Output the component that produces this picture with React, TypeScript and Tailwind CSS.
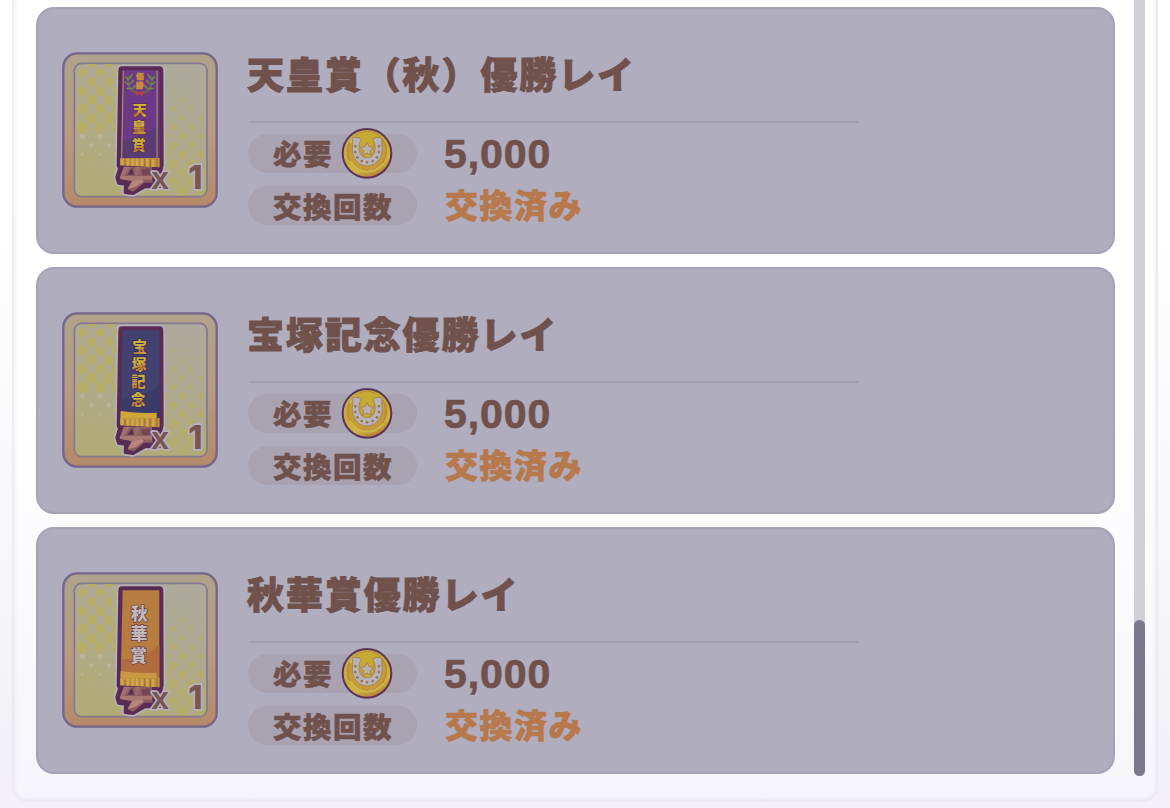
import React from 'react';

type Kind = 'tenno' | 'takarazuka' | 'shuka';

interface Prize {
  kind: Kind;
  title: string;
  cost: string;
}

const prizes: Prize[] = [
  { kind: 'tenno', title: '天皇賞（秋）優勝レイ', cost: '5,000' },
  { kind: 'takarazuka', title: '宝塚記念優勝レイ', cost: '5,000' },
  { kind: 'shuka', title: '秋華賞優勝レイ', cost: '5,000' },
];

interface Glyph {
  c: string;
  x: number;
  y: number;
}

interface Banner {
  cloth: string;
  shade: string;
  outline: string;
  size: number;
  glyphs: Glyph[];
}

const banners: Record<Kind, Banner> = {
  tenno: {
    cloth: '#6d3888',
    shade: '#5a3b73',
    outline: '#573052',
    size: 42,
    glyphs: [
      { c: '天', x: 269, y: 225 },
      { c: '皇', x: 267, y: 275 },
      { c: '賞', x: 266, y: 331 },
    ],
  },
  takarazuka: {
    cloth: '#42416f',
    shade: '#3b3b69',
    outline: '#38285c',
    size: 44,
    glyphs: [
      { c: '宝', x: 269, y: 157 },
      { c: '塚', x: 267, y: 209 },
      { c: '記', x: 265, y: 261 },
      { c: '念', x: 264, y: 314 },
    ],
  },
  shuka: {
    cloth: '#b77d40',
    shade: '#b06c3e',
    outline: '#6b3f45',
    size: 50,
    glyphs: [
      { c: '秋', x: 268, y: 179 },
      { c: '華', x: 267, y: 241 },
      { c: '賞', x: 266, y: 307 },
    ],
  },
};

const banner = "font-['Liberation_Sans','Noto_Sans_CJK_JP',sans-serif] font-black";

// Halftone dots: dark ones upper left and lower right, light ones lower left.
const dots: { x: number; y: number; r: number; light: boolean }[] = [];
for (let row = 0; row < 15; row++) {
  const y = 71 + row * 27.2;
  const light = y > 280;
  for (let col = 0; col < 8; col++) {
    const even = row % 2 === 0;
    const shifted = light ? !even : even;
    const left = 97 + col * 53 + (shifted ? 27 : 0);
    if (left < 205) {
      dots.push({ x: left, y, r: light ? Math.max(1.5, 9 - (y - 280) / 14) : 12 + Math.min(5, y / 50), light });
    }
    const right = 370 + (col - 1) * 54 + (even ? 27 : 0);
    if (right > 340 && right < 480 && y > 145) {
      dots.push({ x: right, y, r: Math.min(15, 4.5 + (y - 150) / 20 - (right - 370) / 40), light: false });
    }
  }
}

function PrizeIcon({ kind }: { kind: Kind }) {
  const b = banners[kind];
  const id = (s: string) => `${kind}-${s}`;
  const silhouette =
    'M216 83 H329 Q336 83 336 92 L337 376 L334 388 L330 440 L284 441 L250 461 L225 458 L226 433 L205 430 L200 412 L208 386 L204 378 L209 92 Q209 83 216 83 Z';
  return (
    <svg className="block h-[156px] w-[156px] shrink-0" viewBox="36 36 468 468">
      <defs>
        <linearGradient id={id('frame')} x1="0" y1="0" x2="0" y2="1">
          <stop offset="0" stopColor="#b1a28b" />
          <stop offset="0.5" stopColor="#b69b80" />
          <stop offset="1" stopColor="#b48a69" />
        </linearGradient>
        <linearGradient id={id('bg')} x1="0.8" y1="0" x2="0.4" y2="1">
          <stop offset="0" stopColor="#adaa9c" />
          <stop offset="0.5" stopColor="#aea98f" />
          <stop offset="1" stopColor="#b1ab76" />
        </linearGradient>
        <linearGradient id={id('gold')} x1="0" y1="0" x2="0.3" y2="1">
          <stop offset="0" stopColor="#cdb33e" />
          <stop offset="0.6" stopColor="#cdab3c" />
          <stop offset="0.8" stopColor="#b87035" />
          <stop offset="1" stopColor="#caa440" />
        </linearGradient>
        <clipPath id={id('clip')}>
          <rect x="76" y="72" width="392" height="396" rx="18" />
        </clipPath>
      </defs>
      <rect x="40" y="40" width="460" height="460" rx="42" fill={`url(#${id('frame')})`} stroke="#75648b" strokeWidth="7" />
      <rect x="73" y="70" width="398" height="400" rx="22" fill={`url(#${id('bg')})`} stroke="#84778f" strokeWidth="5" />
      <g clipPath={`url(#${id('clip')})`}>
        {dots.map((d, i) => (
          <circle key={i} cx={d.x} cy={d.y} r={d.r} fill={d.light ? '#bbb499' : '#b7ad66'} opacity={d.x > 300 ? 0.7 : 0.9} />
        ))}
      </g>
      <path d={silhouette} fill="#b8b0ba" stroke="#b8b0ba" strokeWidth="18" strokeLinejoin="round" />
      <path d={silhouette} fill="#582c55" stroke="#582c55" strokeWidth="8" strokeLinejoin="round" />
      {/* wooden stand */}
      <path d="M222 380 H306 L308 428 L282 428 L250 455 L232 448 L246 423 L209 416 Z" fill="#8d5d65" />
      <path d="M222 380 L240 380 L224 406 L209 414 Z" fill="#a2716f" />
      <path d="M246 384 L252 404 L232 404 Z" fill="#56304d" />
      <path d="M256 381 L270 381 L264 405 L254 405 Z" fill="#996a6c" />
      <path d="M274 389 L300 385 L303 404 L278 406 Z" fill="#734654" />
      <path d="M211 408 L306 408 L306 419 L270 418 L246 423 L210 417 Z" fill="#a8776f" />
      <path d="M246 424 L275 417 L282 424 L257 441 L233 447 Z" fill="#b88679" />
      {/* cloth */}
      <path d="M218 91 H328 L328 359 H212 Z" fill={b.cloth} />
      <path d="M214 300 Q282 292 328 256 V359 H213 Z" fill={b.shade} />
      {kind === 'tenno' ? (
        <>
          <path d="M220 92 L215 354 M321 92 V354" fill="none" stroke="#b39a65" strokeWidth="3" />
          <path d="M235 107 Q230 148 259 160 M305 107 Q311 148 280 160" fill="none" stroke="#63783f" strokeWidth="4" />
          <path d="M234 119 l-6 -8 M235 133 l-8 -6 M242 146 l-10 -1 M238 116 l8 -12 M240 132 l10 -10 M247 146 l9 -9 M306 119 l6 -8 M305 133 l8 -6 M298 146 l10 -1 M302 116 l-8 -12 M300 132 l-10 -10 M293 146 l-9 -9" stroke="#6f8a48" strokeWidth="5" strokeLinecap="round" />
          <path d="M256 152 L269 157 L282 152 L279 169 L269 162 L258 168 Z" fill="#b5423f" />
          <g className={banner} fontSize="22" textAnchor="middle" fill="#d0a03c" stroke="#c58a3a" strokeWidth="2">
            <text x="270" y="117">優</text>
            <text x="269" y="143">勝</text>
          </g>
        </>
      ) : (
        <path d="M212 333 Q269 342 320 338 V360 H211 Z" fill={kind === 'shuka' ? '#c79940' : '#d0a737'} />
      )}
      <g className={banner} fontSize={b.size} textAnchor="middle">
        {b.glyphs.map((g) => (
          <text key={g.c} x={g.x} y={g.y} fill={kind === 'shuka' ? '#c0b9bd' : `url(#${id('gold')})`} stroke={b.outline} strokeWidth="4" paintOrder="stroke">
            {g.c}
          </text>
        ))}
      </g>
      <path d="M210 355 L329 354 V382 L210 376 Z" fill="#bf8f3d" />
      <path d="M217 356 V376 M233 356 V377 M248 356 V378 M261 356 V379 M276 356 V379 M292 356 V380 M309 356 V380" stroke="#cda94b" strokeWidth="7" />
      <path d="M225 359 V377 M284 357 V379 M301 357 V380 M321 355 V381" stroke="#a9733d" strokeWidth="4" />
      {/* quantity */}
      <g fill="#79564f" stroke="#b8b0c1" strokeWidth="10" strokeLinejoin="round" paintOrder="stroke">
        <text className="font-['Liberation_Sans',sans-serif] font-bold" x="304" y="446" fontSize="96">x</text>
        <text className="font-['Inter',sans-serif] font-extrabold" x="415" y="446" fontSize="97">1</text>
      </g>
    </svg>
  );
}

function Coin({ uid }: { uid: string }) {
  return (
    <svg className="-my-[7px] block h-[52px] w-[52px] shrink-0" viewBox="0 0 156 156">
      <defs>
        <linearGradient id={uid} x1="0.2" y1="0" x2="0.6" y2="1">
          <stop offset="0" stopColor="#c3aa4a" />
          <stop offset="0.5" stopColor="#c9a937" />
          <stop offset="0.78" stopColor="#cdb443" />
          <stop offset="1" stopColor="#b67d3a" />
        </linearGradient>
      </defs>
      <circle cx="78" cy="76" r="73" fill={`url(#${uid})`} stroke="#5a3358" strokeWidth="6" />
      <circle cx="78" cy="70" r="58" fill="#c49b37" stroke="#b98838" strokeWidth="4" />
      <path d="M29 101 Q46 130 79 131 Q108 130 126 108" fill="none" stroke="#cdb74a" strokeWidth="6" strokeLinecap="round" />
      <path d="M28 44 A58 58 0 0 1 52 20" fill="none" stroke="#c5ba7e" strokeWidth="5" strokeLinecap="round" />
      <path d="M40 25 Q78 -2 116 25 L99 41 L94 85 Q77 93 63 82 L56 43 Z" fill="#c5aa34" />
      <path d="M34 34 Q37 27 44 28 L57 30 Q63 34 57 41 C51 56 52 89 78 89 C104 89 106 56 99 41 Q94 34 100 30 L113 28 Q120 27 123 34 L122 45 C131 78 111 114 78 114 C45 114 27 78 36 45 Z" fill="#b8b2ba" stroke="#a98752" strokeWidth="3" />
      <path d="M78 43 L84 56 L98 58 L88 68 L91 82 L78 75 L65 82 L68 68 L58 58 L72 56 Z" fill="#b9b2b5" stroke="#ab8146" strokeWidth="3" strokeLinejoin="round" />
      <g fill="#97754a">
        <circle cx="43" cy="55" r="4" />
        <circle cx="43" cy="72" r="4" />
        <circle cx="49" cy="88" r="4" />
        <circle cx="62" cy="99" r="4" />
        <circle cx="78" cy="103" r="4" />
        <circle cx="95" cy="99" r="4" />
        <circle cx="108" cy="88" r="4" />
        <circle cx="114" cy="72" r="4" />
        <circle cx="114" cy="55" r="4" />
      </g>
    </svg>
  );
}

function PrizeCard({ prize }: { prize: Prize }) {
  return (
    <article className="flex h-[247px] w-[1079px] shrink-0 rounded-[18px] border-2 border-[#a7a3b4] bg-[#b0adbe] pt-[43px] pl-[24px] text-[#70514c] shadow-[inset_0_0_1px_#aba7b8]">
      <PrizeIcon kind={prize.kind} />
      <div className="ml-[30px] w-[611px]">
        <h2 className="-mt-[2px] -ml-px h-[48px] text-[37px] leading-[46px] font-black tracking-[1.9px] whitespace-nowrap [-webkit-text-stroke:0.9px_#70514c]">{prize.title}</h2>
        <div className="mt-[23px] ml-px h-[2px] bg-[#a19cae]" />
        <div className="mt-[11px] flex h-[39px] items-center">
          <div className="flex h-[39px] w-[169px] items-center rounded-full bg-[#a9a2b0] pl-[25px]">
            <span className="-mt-[2px] w-[68px] text-[28.5px] leading-[39px] font-black tracking-[1.5px] whitespace-nowrap [-webkit-text-stroke:0.6px_#70514c]">必要</span>
            <Coin uid={`coin-${prize.kind}`} />
          </div>
          <span className="ml-[27px] pt-px font-['Liberation_Sans',sans-serif] text-[41px] leading-[39px] font-bold tracking-[0.9px] [-webkit-text-stroke:0.7px_#70514c]">{prize.cost}</span>
        </div>
        <div className="mt-[13px] flex h-[39px] items-center">
          <div className="h-[39px] w-[169px] rounded-full bg-[#a9a2b0] pl-[25px]">
            <span className="block text-[28.5px] leading-[39px] font-black tracking-[1.5px] whitespace-nowrap [-webkit-text-stroke:0.6px_#70514c]">交換回数</span>
          </div>
          <span className="-mt-[3px] ml-[28px] text-[33px] leading-[39px] font-black tracking-[1.5px] text-[#b7784c] [-webkit-text-stroke:0.6px_#b7784c]">交換済み</span>
        </div>
      </div>
    </article>
  );
}

export default function App() {
  return (
    <main className="h-[808px] w-[1170px] overflow-hidden bg-linear-to-b from-white from-25% to-[#f2f0f6] px-[12px] font-['Noto_Sans_CJK_JP',sans-serif]">
      <section className="flex h-[802px] w-[1146px] rounded-b-[14px] border-x border-b border-[#ececf0] bg-linear-to-b from-white from-50% to-[#f6f5fb] pl-[23px] shadow-[inset_0_-4px_4px_-3px_#e2e0e7,inset_4px_0_4px_-3px_#e6e5ea,inset_-4px_0_4px_-3px_#e6e5ea]">
        <div className="flex flex-col gap-[13px] pt-[7px]">
          {prizes.map((p) => (
            <PrizeCard key={p.kind} prize={p} />
          ))}
        </div>
        <div className="ml-[19px] flex h-[776px] w-[11px] flex-col justify-end rounded-b-full bg-[#d2cfda]">
          <div className="h-[156px] rounded-full bg-[#7c778d]" />
        </div>
      </section>
    </main>
  );
}
